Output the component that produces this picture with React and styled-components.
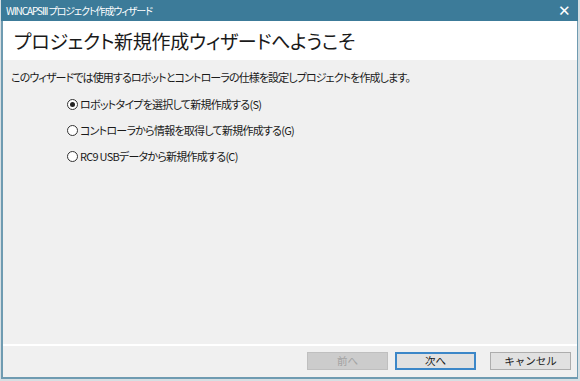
import React from 'react';
import styled, { createGlobalStyle } from 'styled-components';

const GlobalStyle = createGlobalStyle`
  html, body {
    margin: 0;
    padding: 0;
    background: #d7dfe3;
  }
  body {
    font-family: "Noto Sans CJK JP", "Liberation Sans", sans-serif;
    font-feature-settings: "palt";
  }
`;

const Window = styled.div`
  box-sizing: border-box;
  margin-left: 1px;
  width: 577px;
  height: 379px;
  border: 2px solid #6f9bb1;
  border-top: none;
  border-right-width: 1px;
  background: #f0f0f0;
  display: flex;
  flex-direction: column;
`;

const TitleBar = styled.div`
  height: 21px;
  margin: 0 -1px 0 -2px;
  background: #3c7b99;
  color: #fff;
  display: flex;
  align-items: center;
  justify-content: space-between;
  padding: 0 8px 0 5px;
  font-size: 10px;
  letter-spacing: -1.1px;
`;

const Close = styled.span`
  font-family: "Liberation Sans", sans-serif;
  font-size: 15px;
  line-height: 1;
`;

const Header = styled.div`
  height: 39px;
  background: #fff;
  display: flex;
  align-items: center;
  padding-left: 11px;
  font-size: 19px;
  color: #1a1a1a;
  letter-spacing: -0.3px;
`;

const Body = styled.div`
  flex: 1;
  padding: 10px 8px 0;
  color: #1a1a1a;
  font-size: 11px;
`;

const Intro = styled.p`
  margin: 0 0 11px;
  line-height: 15px;
  letter-spacing: -0.9px;
`;

const Options = styled.div`
  display: flex;
  flex-direction: column;
  gap: 10px;
  padding-left: 56px;
`;

const Option = styled.label`
  display: flex;
  align-items: center;
  height: 16px;
  letter-spacing: -0.75px;
`;

const Radio = styled.span`
  box-sizing: border-box;
  width: 11px;
  height: 11px;
  border-radius: 50%;
  border: 1px solid #333;
  background: #fff;
  margin-right: 2px;
  display: flex;
  align-items: center;
  justify-content: center;
  &::after {
    content: "";
    width: 5px;
    height: 5px;
    border-radius: 50%;
    background: ${p => (p.$checked ? '#222' : 'transparent')};
  }
`;

const Separator = styled.div`
  height: 2px;
  background: #fff;
`;

const Footer = styled.div`
  height: 31px;
  display: flex;
  justify-content: flex-end;
  align-items: center;
  gap: 7px;
  padding-right: 6px;
  box-sizing: border-box;
  padding-bottom: 1px;
`;

const Button = styled.button`
  box-sizing: border-box;
  width: 81px;
  height: 18px;
  margin-left: ${p => (p.$gap ? '7px' : '0')};
  font-family: inherit;
  font-size: 10.5px;
  padding: 0;
  line-height: 1;
  background: ${p => (p.disabled ? '#cccccc' : '#e1e1e1')};
  color: ${p => (p.disabled ? '#a3a3a3' : '#1a1a1a')};
  border: ${p =>
    p.$primary ? '2px solid #3c87c8' : p.disabled ? '1px solid #bfbfbf' : '1px solid #adadad'};
`;

export default function App() {
  return (
    <>
      <GlobalStyle />
      <Window>
        <TitleBar>
          <span>WINCAPSIII プロジェクト作成ウィザード</span>
          <Close>✕</Close>
        </TitleBar>
        <Header>プロジェクト新規作成ウィザードへようこそ</Header>
        <Body>
          <Intro>このウィザードでは使用するロボットとコントローラの仕様を設定しプロジェクトを作成します。</Intro>
          <Options>
            <Option><Radio $checked />ロボットタイプを選択して新規作成する(S)</Option>
            <Option><Radio />コントローラから情報を取得して新規作成する(G)</Option>
            <Option><Radio />RC9 USBデータから新規作成する(C)</Option>
          </Options>
        </Body>
        <Separator />
        <Footer>
          <Button disabled>前へ</Button>
          <Button $primary>次へ</Button>
          <Button $gap>キャンセル</Button>
        </Footer>
      </Window>
    </>
  );
}
